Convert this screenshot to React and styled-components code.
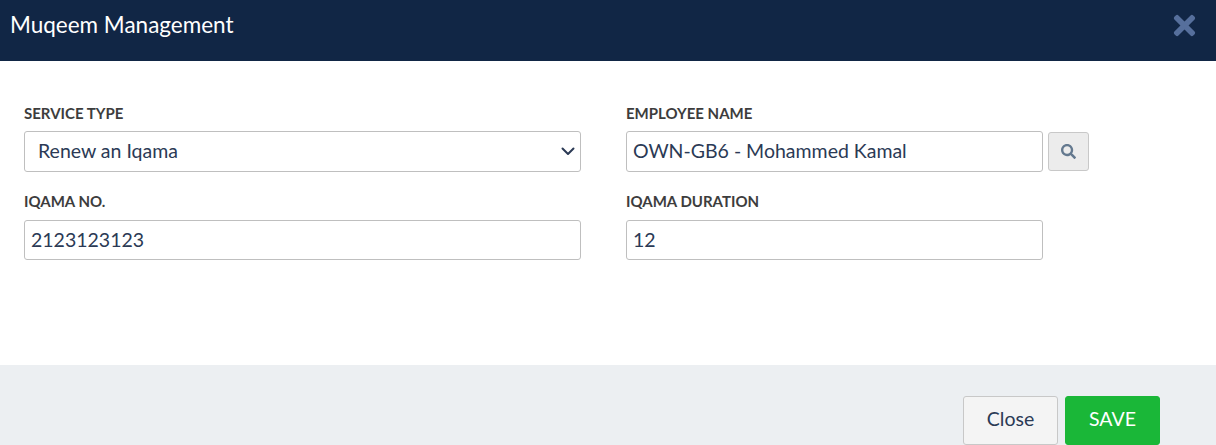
import React from 'react'
import styled, { createGlobalStyle } from 'styled-components'
import { FaSearch, FaTimes } from 'react-icons/fa'

const Global = createGlobalStyle`
  html, body {
    margin: 0;
    padding: 0;
    height: 445px;
    overflow: hidden;
    background: #fff;
    font-family: Lato, "Open Sans", sans-serif;
  }
  * { box-sizing: border-box; }
`
const Modal = styled.div`
  width: 1216px;
  height: 445px;
  display: flex;
  flex-direction: column;
  overflow: hidden;
`
const Header = styled.div`
  height: 61px;
  flex: none;
  background: #112645;
  display: flex;
  align-items: center;
  justify-content: space-between;
  padding: 0 16px 11px 10px;
`
const Title = styled.h4`
  margin: 0;
  font-size: 22.5px;
  font-weight: 400;
  line-height: 32px;
  color: #fff;
`
const CloseIcon = styled.button`
  border: 0;
  padding: 0;
  background: none;
  display: flex;
  color: #566f9c;
  font-size: 31px;
`
const Body = styled.div`
  height: 304px;
  flex: none;
  padding: 43px 24px 0;
  display: grid;
  grid-template-columns: 557px 463px;
  column-gap: 45px;
  grid-auto-rows: 88px;
`
const Field = styled.div`
  display: flex;
  flex-direction: column;
`
const Label = styled.label`
  font-size: 15px;
  font-weight: 700;
  line-height: 18px;
  height: 18px;
  margin-bottom: ${p => p.$gap || 10}px;
  color: #3d3d3d;
`
const Row = styled.div`
  display: flex;
  align-items: center;
  gap: 5px;
`
const Input = styled.input`
  width: ${p => p.$width || '100%'};
  height: ${p => p.$height || 40}px;
  border: 1px solid #bfbfbf;
  border-radius: 3px;
  padding: 0 6px 2px;
  font-family: inherit;
  font-size: 19.5px;
  color: #2b3a55;
  background: #fff;
  outline: none;
`
const SelectWrap = styled.div`
  position: relative;
  width: 100%;
`
const Select = styled.select`
  appearance: none;
  width: 100%;
  height: 41px;
  border: 1px solid #bfbfbf;
  border-radius: 3px;
  padding: 0 12px 2px 13px;
  font-family: inherit;
  font-size: 19.5px;
  color: #2b3a55;
  background: #fff;
  outline: none;
`
const Chevron = styled.svg`
  position: absolute;
  right: 6px;
  top: 16px;
  width: 14px;
  height: 9px;
  pointer-events: none;
`
const SearchButton = styled.button`
  width: 41px;
  height: 39px;
  flex: none;
  border: 1px solid #c8c8c8;
  border-radius: 3px;
  background: #ececec;
  color: #64798f;
  display: flex;
  align-items: center;
  justify-content: center;
  padding: 0;
  font-size: 15px;
`
const Footer = styled.div`
  flex: 1;
  background: #eceff2;
  padding: 31px 56px 0 0;
  display: flex;
  justify-content: flex-end;
  align-items: flex-start;
  gap: 7px;
`
const Button = styled.button`
  width: 95px;
  height: 49px;
  flex: none;
  border-radius: 3px;
  border: 1px solid ${p => (p.$primary ? '#1ab738' : '#c8c8c8')};
  background: ${p => (p.$primary ? '#1ab738' : '#f4f4f4')};
  color: ${p => (p.$primary ? '#fff' : '#2b3a55')};
  font-family: inherit;
  font-size: 19.5px;
  padding: 0 0 4px;
`

export default function App() {
  return (
    <Modal>
      <Global />
      <Header>
        <Title>Muqeem Management</Title>
        <CloseIcon><FaTimes /></CloseIcon>
      </Header>
      <Body>
        <Field>
          <Label $gap={9}>SERVICE TYPE</Label>
          <SelectWrap>
            <Select defaultValue="renew">
              <option value="renew">Renew an Iqama</option>
            </Select>
            <Chevron viewBox="0 0 14 9">
              <path d="M1.500 1.500L7 7l5.500-5.500" fill="none" stroke="#2b3a55" strokeWidth="2" strokeLinecap="round" strokeLinejoin="round" />
            </Chevron>
          </SelectWrap>
        </Field>
        <Field>
          <Label $gap={9}>EMPLOYEE NAME</Label>
          <Row>
            <Input $width="417px" $height={41} defaultValue="OWN-GB6 - Mohammed Kamal" />
            <SearchButton><FaSearch /></SearchButton>
          </Row>
        </Field>
        <Field>
          <Label>IQAMA NO.</Label>
          <Input defaultValue="2123123123" />
        </Field>
        <Field>
          <Label>IQAMA DURATION</Label>
          <Input $width="417px" defaultValue="12" />
        </Field>
      </Body>
      <Footer>
        <Button>Close</Button>
        <Button $primary>SAVE</Button>
      </Footer>
    </Modal>
  )
}
